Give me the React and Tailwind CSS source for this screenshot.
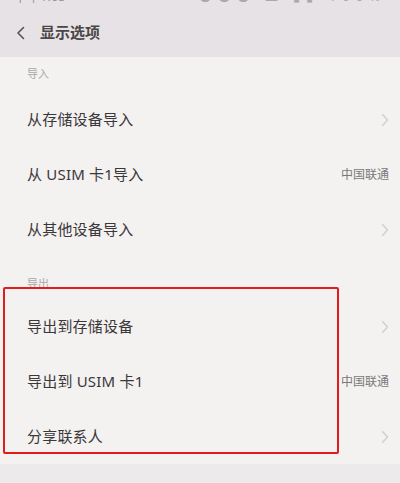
import React from "react";

const font = { fontFamily: '"Noto Sans", "Noto Sans CJK SC", sans-serif' };

const Chevron = () => (
  <svg width="8" height="14" viewBox="0 0 8 14" fill="none" className="shrink-0">
    <path d="M1.5 1.5 L6.5 7 L1.5 12.5" stroke="#cfcdcd" strokeWidth="1.3" strokeLinecap="round" strokeLinejoin="round" />
  </svg>
);

const Row = ({ label, right }) => (
  <div className="h-[55px] flex items-center justify-between pl-[27px] pr-[11px]">
    <span className="text-[15px] text-[#3a3839] tracking-[0.2px]">{label}</span>
    {right ? (
      <span className="text-[12px] text-[#7a7878]">{right}</span>
    ) : (
      <Chevron />
    )}
  </div>
);

export default function App() {
  return (
    <div className="relative w-[400px] h-[483px] overflow-hidden bg-[#f4f1f1]" style={font}>
      {/* header */}
      <div className="h-[57px] bg-[#e7e2e5] flex flex-col">
        <div className="h-[5px] overflow-hidden flex justify-between px-[14px]">
          <span className="text-[13px] leading-none text-[#999] -mt-[10px]">下午1:05</span>
          <span className="text-[13px] leading-none text-[#aaa] -mt-[10px] tracking-[6px]">●●● ▲ ▮▮ 100%</span>
        </div>
        <div className="flex-1 flex items-center pl-[16px] pt-[3px]">
          <svg width="10" height="14" viewBox="0 0 10 14" fill="none">
            <path d="M7.5 1.5 L2 7 L7.5 12.5" stroke="#555" strokeWidth="1.6" strokeLinecap="round" strokeLinejoin="round" />
          </svg>
          <span className="ml-[14px] text-[15px] font-bold text-[#4a4748]">显示选项</span>
        </div>
      </div>

      {/* import */}
      <div className="h-[35px] flex items-center pl-[27px]">
        <span className="text-[11px] text-[#aaa7a8]">导入</span>
      </div>
      <Row label="从存储设备导入" />
      <Row label="从 USIM 卡1导入" right="中国联通" />
      <Row label="从其他设备导入" />

      {/* export */}
      <div className="h-[42px] flex items-start pt-[19px] pl-[27px]">
        <span className="text-[11px] text-[#aaa7a8]">导出</span>
      </div>
      <Row label="导出到存储设备" />
      <Row label="导出到 USIM 卡1" right="中国联通" />
      <Row label="分享联系人" />

      <div className="h-[30px] bg-[#eceaea]" />

      {/* annotation box */}
      <div className="absolute left-[3px] top-[287px] w-[336px] h-[167px] border-2 border-[#e21c1c] rounded-[2px]" />
    </div>
  );
}
